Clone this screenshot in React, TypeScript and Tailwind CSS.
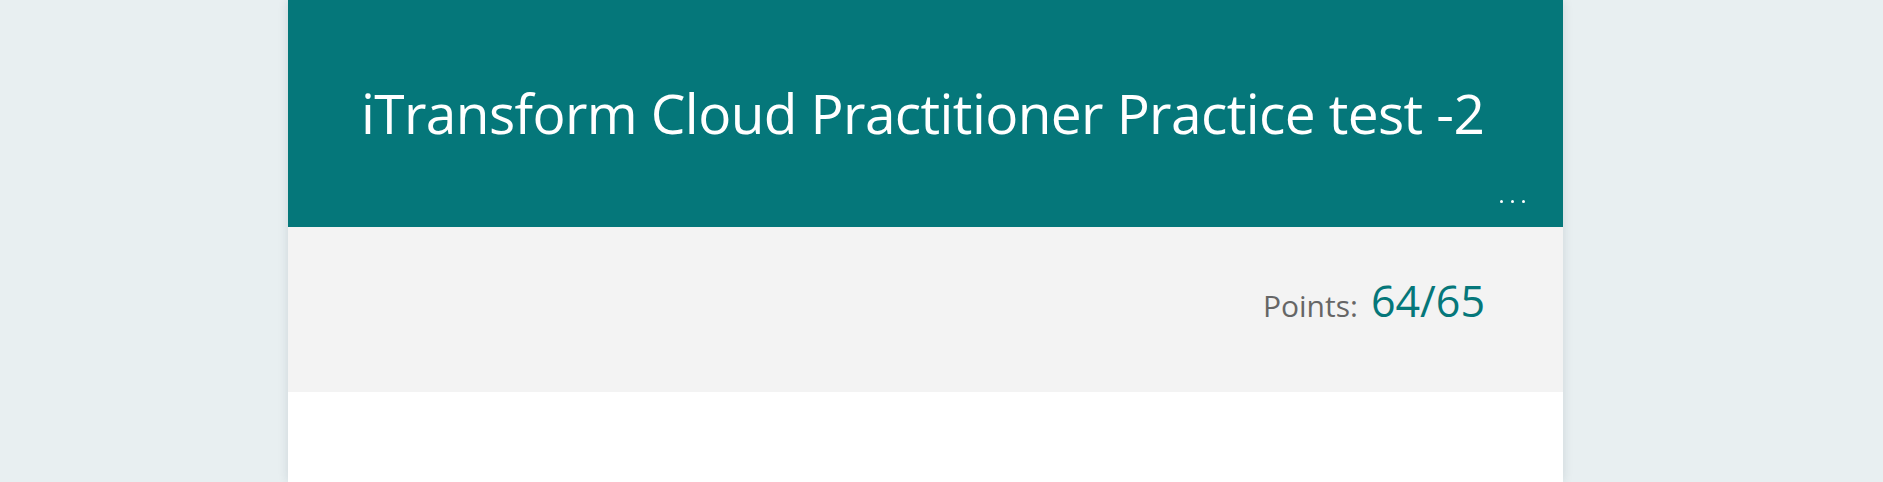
import React from 'react';

const font = { fontFamily: '"Segoe UI", "Open Sans", "Noto Sans", sans-serif' };

const App: React.FC = () => {
  return (
    <div className="h-screen overflow-hidden w-full bg-[#e8eff1] flex justify-center pr-[32px]" style={font}>
      <div className="w-[1275px] shrink-0 flex flex-col bg-white shadow-[0_0_10px_rgba(0,40,60,0.12)]">
        <header className="h-[227px] shrink-0 bg-[#05777a] flex flex-col">
          <h1 className="pl-[73px] pt-[77px] text-[55px] leading-[72px] font-normal text-white tracking-[-0.6px]">
            iTransform Cloud Practitioner Practice test -2
          </h1>
          <div className="mt-auto mb-[24px] pr-[38px] flex justify-end gap-[8px]">
            <span className="w-[3px] h-[3px] rounded-full bg-white"></span>
            <span className="w-[3px] h-[3px] rounded-full bg-white"></span>
            <span className="w-[3px] h-[3px] rounded-full bg-white"></span>
          </div>
        </header>
        <section className="h-[165px] shrink-0 bg-[#f3f3f3] flex justify-end items-start pr-[78px] pt-[42px]">
          <div className="flex items-baseline gap-[13px]">
            <span className="text-[30px] text-[#666666]">Points:</span>
            <span className="text-[43px] text-[#05777a]">64/65</span>
          </div>
        </section>
        <div className="flex-1 bg-white"></div>
      </div>
    </div>
  );
};

export default App;
